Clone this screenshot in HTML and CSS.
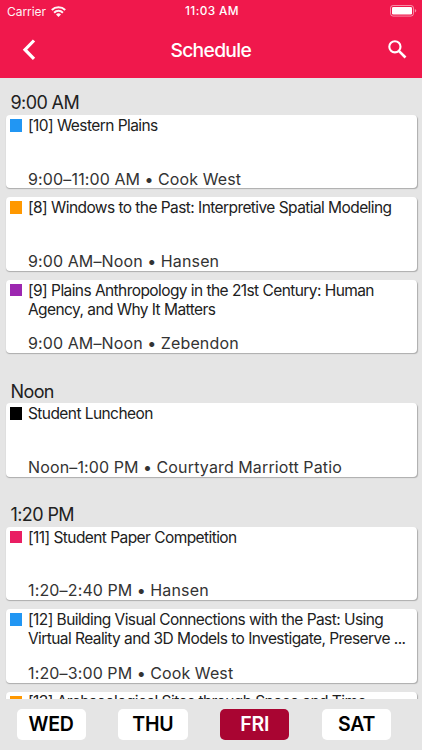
FILE: index.html
```html
<!DOCTYPE html>
<html lang="en">
<head>
  <meta charset="UTF-8">
  <meta name="viewport" content="width=device-width, initial-scale=1.0">
  <title>Schedule</title>
  <link rel="stylesheet" href="styles.css">
</head>
<body>
  <header>
    <div class="status">
      <div class="carrier">
        <span>Carrier</span>
        <svg width="15" height="11" viewBox="0 0 15 11" fill="none" stroke="#fff" stroke-width="2">
          <path d="M.8 4a9.5 9.5 0 0 1 13.4 0"/>
          <path d="M3.1 6.7a6.2 6.2 0 0 1 8.8 0"/>
          <path d="M7.5 11L5 8.5a3.5 3.5 0 0 1 5 0z" fill="#fff" stroke="none"/>
        </svg>
      </div>
      <span class="clock">11:03 AM</span>
      <svg class="battery" width="27" height="12" viewBox="0 0 27 12">
        <rect x=".5" y=".5" width="23" height="10.6" rx="2.6" fill="none" stroke="#fff" stroke-opacity=".5"/>
        <rect x="2" y="2" width="20" height="7.6" rx="1.3" fill="#fff"/>
        <path d="M24.8 4v3.6q1.5-.6 1.5-1.8t-1.5-1.8z" fill="#fff" fill-opacity=".5"/>
      </svg>
    </div>
    <div class="navbar">
      <svg width="14" height="22" viewBox="0 0 14 22" fill="none" stroke="#fff" stroke-width="3.2">
        <path d="M12 1.5L3 10.7l9 9.2"/>
      </svg>
      <h1>Schedule</h1>
      <svg width="19" height="19" viewBox="0 0 19 19" fill="none" stroke="#fff" stroke-width="2.1">
        <circle cx="6.9" cy="6.8" r="5.6"/>
        <path d="M10.8 10.8l6.7 6.7" stroke-width="2.6"/>
      </svg>
    </div>
  </header>

  <main>
    <section>
      <h2>9:00 AM</h2>
      <div class="card blue">
        <h3>[10] Western Plains</h3>
        <p>9:00–11:00 AM • Cook West</p>
      </div>
      <div class="card orange">
        <h3>[8] Windows to the Past: Interpretive Spatial Modeling</h3>
        <p>9:00 AM–Noon • Hansen</p>
      </div>
      <div class="card purple">
        <h3>[9] Plains Anthropology in the 21st Century: Human<br>Agency, and Why It Matters</h3>
        <p>9:00 AM–Noon • Zebendon</p>
      </div>
    </section>
    <section>
      <h2>Noon</h2>
      <div class="card black">
        <h3>Student Luncheon</h3>
        <p>Noon–1:00 PM • Courtyard Marriott Patio</p>
      </div>
    </section>
    <section>
      <h2>1:20 PM</h2>
      <div class="card pink">
        <h3>[11] Student Paper Competition</h3>
        <p>1:20–2:40 PM • Hansen</p>
      </div>
      <div class="card blue">
        <h3>[12] Building Visual Connections with the Past: Using<br>Virtual Reality and 3D Models to Investigate, Preserve ...</h3>
        <p>1:20–3:00 PM • Cook West</p>
      </div>
      <div class="card orange">
        <h3>[13] Archaeological Sites through Space and Time</h3>
      </div>
    </section>
  </main>

  <footer>
    <button>WED</button>
    <button>THU</button>
    <button class="active">FRI</button>
    <button>SAT</button>
  </footer>
</body>
</html>
```
FILE: styles.css
```css
* { box-sizing: border-box; }
body { font-family: Inter, "Liberation Sans", sans-serif; margin: 0; height: 750px; display: flex; flex-direction: column; overflow: hidden; background: #e5e5e5; color: #212121; }
h1, h2, h3, p { margin: 0; font-weight: normal; }
svg { display: block; }

header { height: 77.5px; flex: none; background: #f0184c; color: #fff; }
.status { height: 22px; display: grid; grid-template-columns: 1fr auto 1fr; align-items: center; padding: 0 5px 0 7px; font-size: 12px; }
.carrier { display: flex; gap: 5.5px; align-items: center; letter-spacing: -0.05px; opacity: 0.95; }
.clock { font-weight: 500; font-size: 11.8px; letter-spacing: 0.4px; }
.battery { justify-self: end; margin-bottom: 1px; }
.navbar { height: 55px; display: flex; justify-content: space-between; align-items: center; padding: 0 15.5px 0 21.5px; }
h1 { font-size: 19.3px; font-weight: 500; letter-spacing: -0.7px; margin-left: -1.5px; }

main { flex: none; height: 621px; overflow: hidden; padding: 0 5.5px; }
section { margin-bottom: 12.5px; }
h2 { height: 37.6px; padding: 13.8px 0 0 5px; font-size: 18px; line-height: 23px; letter-spacing: -0.6px; }
.card { height: 73.4px; margin-bottom: 9px; padding: 0 6px 0 22.5px; display: flex; flex-direction: column; justify-content: space-between; background: #fff; border-radius: 4px; box-shadow: 0.5px 1px 1px rgba(0,0,0,0.25); position: relative; }
.card:last-child { margin-bottom: 0; }
.card::before { content: ""; position: absolute; left: 4px; top: 4px; width: 12.5px; height: 12.5px; background: #000; }
.blue::before { background: #2196f3; }
.orange::before { background: #ff9800; }
.purple::before { background: #9c27b0; }
.pink::before { background: #e91e63; }
h3 { font-size: 15.5px; line-height: 19.3px; letter-spacing: -0.58px; word-spacing: 0.1px; white-space: nowrap; padding-top: 0.8px; }
.card p { font-size: 16px; line-height: 18.8px; letter-spacing: 0.15px; word-spacing: -0.3px; color: #333; white-space: nowrap; }

footer { flex: 1; display: flex; gap: 32.5px; padding: 10.5px 0 0 16.5px; }
button { width: 69.3px; height: 30.5px; padding: 0; border: none; border-radius: 5px; background: #fff; color: #000; font-family: inherit; font-size: 19.5px; font-weight: 600; letter-spacing: -0.2px; cursor: pointer; }
button.active { background: #a90532; color: #fff; }
```
